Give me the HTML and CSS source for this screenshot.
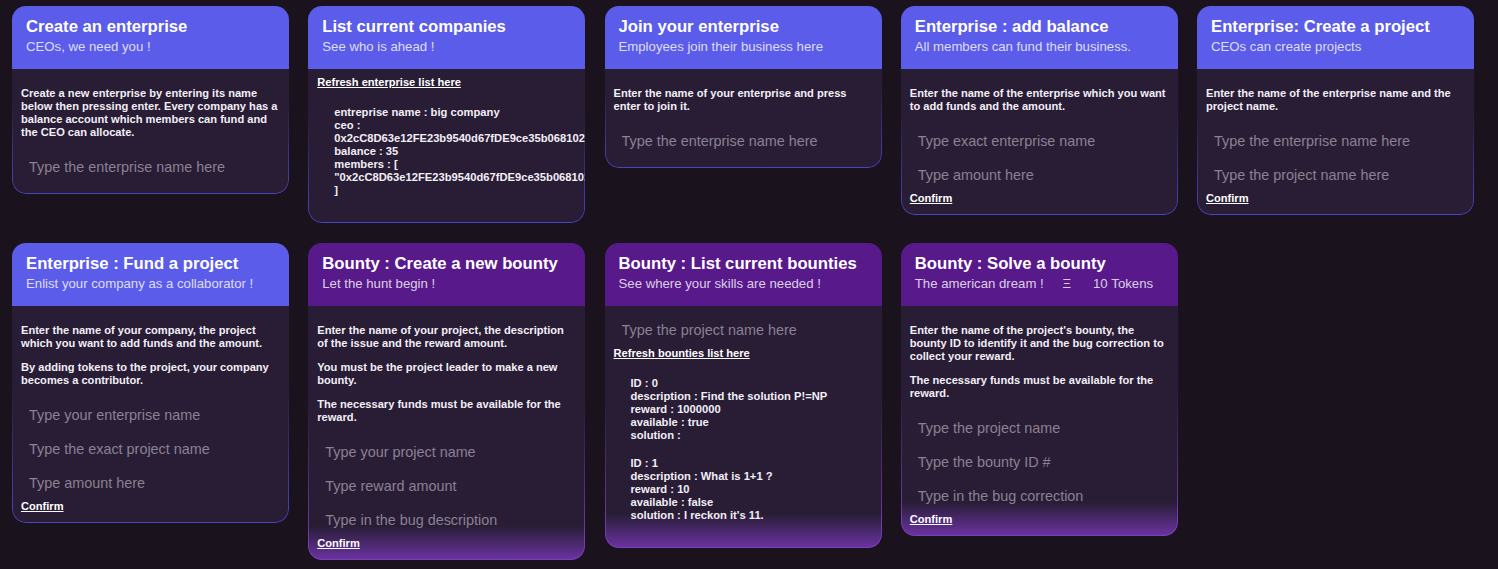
FILE: index.html
```html
<!DOCTYPE html>
<html lang="en">
<head>
<meta charset="utf-8">
<title>Enterprise &amp; Bounty</title>
<link rel="stylesheet" href="styles.css">
</head>
<body>
<main class="grid">

  <section class="card">
    <header class="card-head">
      <h2 class="title">Create an enterprise</h2>
      <p class="subtitle">CEOs, we need you !</p>
    </header>
    <div class="card-body">
      <p class="desc">Create a new enterprise by entering its name below then pressing enter. Every company has a balance account which members can fund and the CEO can allocate.</p>
      <input class="field" type="text" placeholder="Type the enterprise name here">
    </div>
  </section>

  <section class="card">
    <header class="card-head">
      <h2 class="title">List current companies</h2>
      <p class="subtitle">See who is ahead !</p>
    </header>
    <div class="card-body">
      <a class="link" href="#">Refresh enterprise list here</a>
      <ul class="list">
        <li>entreprise name : big company<br>ceo : 0x2cC8D63e12FE23b9540d67fDE9ce35b0681023a1<br>balance : 35<br>members : [ "0x2cC8D63e12FE23b9540d67fDE9ce35b0681023a1" ]</li>
      </ul>
    </div>
  </section>

  <section class="card">
    <header class="card-head">
      <h2 class="title">Join your enterprise</h2>
      <p class="subtitle">Employees join their business here</p>
    </header>
    <div class="card-body">
      <p class="desc">Enter the name of your enterprise and press enter to join it.</p>
      <input class="field" type="text" placeholder="Type the enterprise name here">
    </div>
  </section>

  <section class="card">
    <header class="card-head">
      <h2 class="title">Enterprise : add balance</h2>
      <p class="subtitle">All members can fund their business.</p>
    </header>
    <div class="card-body">
      <p class="desc">Enter the name of the enterprise which you want to add funds and the amount.</p>
      <input class="field" type="text" placeholder="Type exact enterprise name">
      <input class="field" type="text" placeholder="Type amount here">
      <a class="link" href="#">Confirm</a>
    </div>
  </section>

  <section class="card">
    <header class="card-head">
      <h2 class="title">Enterprise: Create a project</h2>
      <p class="subtitle">CEOs can create projects</p>
    </header>
    <div class="card-body">
      <p class="desc">Enter the name of the enterprise name and the project name.</p>
      <input class="field" type="text" placeholder="Type the enterprise name here">
      <input class="field" type="text" placeholder="Type the project name here">
      <a class="link" href="#">Confirm</a>
    </div>
  </section>

  <section class="card">
    <header class="card-head">
      <h2 class="title">Enterprise : Fund a project</h2>
      <p class="subtitle">Enlist your company as a collaborator !</p>
    </header>
    <div class="card-body">
      <p class="desc">Enter the name of your company, the project which you want to add funds and the amount.</p>
      <p class="desc">By adding tokens to the project, your company becomes a contributor.</p>
      <input class="field" type="text" placeholder="Type your enterprise name">
      <input class="field" type="text" placeholder="Type the exact project name">
      <input class="field" type="text" placeholder="Type amount here">
      <a class="link" href="#">Confirm</a>
    </div>
  </section>

  <section class="card bounty">
    <header class="card-head">
      <h2 class="title">Bounty : Create a new bounty</h2>
      <p class="subtitle">Let the hunt begin !</p>
    </header>
    <div class="card-body">
      <p class="desc">Enter the name of your project, the description of the issue and the reward amount.</p>
      <p class="desc">You must be the project leader to make a new bounty.</p>
      <p class="desc">The necessary funds must be available for the reward.</p>
      <input class="field" type="text" placeholder="Type your project name">
      <input class="field" type="text" placeholder="Type reward amount">
      <input class="field" type="text" placeholder="Type in the bug description">
      <a class="link" href="#">Confirm</a>
    </div>
  </section>

  <section class="card bounty">
    <header class="card-head">
      <h2 class="title">Bounty : List current bounties</h2>
      <p class="subtitle">See where your skills are needed !</p>
    </header>
    <div class="card-body">
      <input class="field" type="text" placeholder="Type the project name here">
      <a class="link" href="#">Refresh bounties list here</a>
      <ul class="list">
        <li>ID : 0<br>description : Find the solution P!=NP<br>reward : 1000000<br>available : true<br>solution :</li>
        <li>ID : 1<br>description : What is 1+1 ?<br>reward : 10<br>available : false<br>solution : I reckon it's 11.</li>
      </ul>
    </div>
  </section>

  <section class="card bounty">
    <header class="card-head">
      <h2 class="title">Bounty : Solve a bounty</h2>
      <p class="subtitle">The american dream ! <span class="eth">Ξ</span><span class="tokens">10 Tokens</span></p>
    </header>
    <div class="card-body">
      <p class="desc">Enter the name of the project's bounty, the bounty ID to identify it and the bug correction to collect your reward.</p>
      <p class="desc">The necessary funds must be available for the reward.</p>
      <input class="field" type="text" placeholder="Type the project name">
      <input class="field" type="text" placeholder="Type the bounty ID #">
      <input class="field" type="text" placeholder="Type in the bug correction">
      <a class="link" href="#">Confirm</a>
    </div>
  </section>

</main>
</body>
</html>
```

FILE: styles.css
```css
html, body {
  margin: 0;
  padding: 0;
}

body {
  background: #1a131e;
  color: #f2eff5;
  font-family: "Liberation Sans", Arial, sans-serif;
  min-height: 569px;
}

.grid {
  display: flex;
  flex-wrap: wrap;
  align-items: flex-start;
  gap: 20px 19.25px;
  padding: 6px 0 0 12px;
}

.card {
  position: relative;
  width: 277px;
  border-radius: 14px;
  overflow: hidden;
  background: #281d35;
  display: flex;
  flex-direction: column;
}

.card::after {
  content: "";
  position: absolute;
  inset: 0;
  border-radius: inherit;
  border: 1px solid transparent;
  background: linear-gradient(to bottom, rgba(74, 69, 196, 0) 50%, #4a45c4 100%) border-box;
  -webkit-mask: linear-gradient(#000 0 0) padding-box, linear-gradient(#000 0 0);
  -webkit-mask-composite: xor;
  mask-composite: exclude;
  pointer-events: none;
}

.card.bounty::after {
  background: linear-gradient(to bottom, rgba(120, 60, 180, 0) 50%, #7b3fb8 100%) border-box;
}

.card-head {
  background: #5b5ce9;
  padding: 11px 14px 14px;
}

.bounty .card-head {
  background: #58198b;
}

.title {
  margin: 0;
  font-size: 16.7px;
  line-height: 20px;
  font-weight: bold;
  color: #ffffff;
}

.subtitle {
  margin: 2px 0 0;
  font-size: 13.2px;
  line-height: 16px;
  color: rgba(255, 255, 255, 0.8);
  white-space: nowrap;
}

.eth {
  margin-left: 15px;
}

.tokens {
  margin-left: 22px;
}

.card-body {
  display: flex;
  flex-direction: column;
  align-items: flex-start;
  padding: 7px 9px 10px;
}

.bounty .card-body {
  background: linear-gradient(to bottom, #281d35 calc(100% - 34px), #6b33a3 100%);
}

.desc {
  margin: 11px 0;
  font-size: 11.1px;
  line-height: 13px;
  font-weight: bold;
  color: #f2eff5;
}

.desc + .desc {
  margin-top: 0;
}

.field {
  display: block;
  box-sizing: border-box;
  width: 100%;
  height: 34px;
  margin: 0;
  padding: 0 8px;
  border: none;
  outline: none;
  background: transparent;
  color: #f2eff5;
  font-family: "Liberation Sans", Arial, sans-serif;
  font-size: 14.4px;
}

.field::placeholder {
  color: #8a8192;
}

.link {
  font-size: 11.1px;
  line-height: 13px;
  font-weight: bold;
  color: #ffffff;
  text-decoration: underline;
}

.list {
  margin: 17px 0 16px;
  padding: 0 0 0 17px;
  list-style: none;
  font-size: 11.2px;
  line-height: 13px;
  font-weight: bold;
  color: #f2eff5;
  width: calc(100% - 17px);
}

.list li + li {
  margin-top: 15px;
}
```
